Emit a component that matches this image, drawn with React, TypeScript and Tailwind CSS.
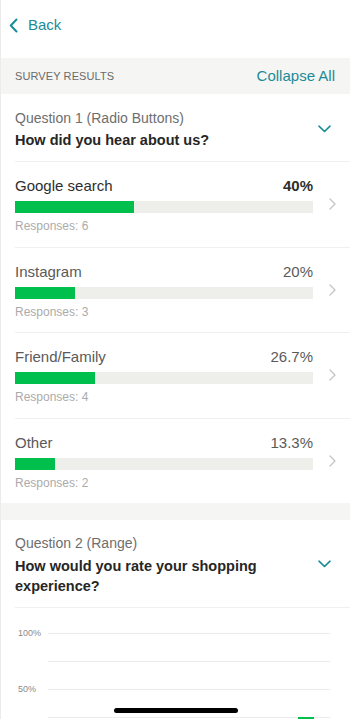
import React from "react";

const TEAL = "text-[#1b8b98]";

type Option = { label: string; pct: string; width: number; responses: number; top?: boolean };

const options: Option[] = [
  { label: "Google search", pct: "40%", width: 40, responses: 6, top: true },
  { label: "Instagram", pct: "20%", width: 20, responses: 3 },
  { label: "Friend/Family", pct: "26.7%", width: 26.7, responses: 4 },
  { label: "Other", pct: "13.3%", width: 13.3, responses: 2 },
];

function ChevronDown() {
  return (
    <svg width="13" height="8" viewBox="0 0 13 8" fill="none">
      <path d="M1 1.2l5.5 5.3L12 1.2" stroke="#1b8b98" strokeWidth="1.6" strokeLinecap="round" strokeLinejoin="round" />
    </svg>
  );
}

function ChevronRight() {
  return (
    <svg width="7" height="12" viewBox="0 0 7 12" fill="none">
      <path d="M1 1l5 5-5 5" stroke="#c4c4c8" strokeWidth="1.3" strokeLinecap="round" strokeLinejoin="round" />
    </svg>
  );
}

function OptionRow({ opt, last }: { opt: Option; last?: boolean }) {
  return (
    <div className={`ml-[14px] flex items-center ${last ? "" : "border-b border-[#f0f0ee]"}`}>
      <div className={`w-[298px] pt-[14px] ${last ? "pb-[12px]" : "pb-[12.5px]"}`}>
        <div className="flex h-5 items-center justify-between text-[15px] leading-5">
          <span className={opt.top ? "text-[#2e2e2e]" : "text-[#5a5a5a]"}>{opt.label}</span>
          <span className={opt.top ? "font-bold text-[#2e2e2e]" : "text-[#5a5a5a]"}>{opt.pct}</span>
        </div>
        <div className="mt-[5px] h-3 w-full bg-[#eeeeeb]">
          <div className="h-full bg-[#00bf4c]" style={{ width: `${opt.width}%` }} />
        </div>
        <div className="mt-[6px] text-[12px] leading-[15px] text-[#ababab]">Responses: {opt.responses}</div>
      </div>
      <div className="flex flex-1 justify-center pl-[2px]">
        <ChevronRight />
      </div>
    </div>
  );
}

export default function App() {
  return (
    <div
      className="relative h-[719px] w-[350px] overflow-hidden border-l border-[#ebebeb] bg-white"
      style={{ fontFamily: '"Liberation Sans", Arial, sans-serif' }}
    >
      {/* nav */}
      <div className="flex h-[58px] items-start pl-[8px] pt-[15px]">
        <div className={`flex items-center gap-[10px] text-[15px] leading-5 ${TEAL}`}>
          <svg width="9" height="15" viewBox="0 0 9 15" fill="none">
            <path d="M7.5 1.5L1.8 7.5l5.7 6" stroke="#1b8b98" strokeWidth="2" strokeLinecap="round" strokeLinejoin="round" />
          </svg>
          <span>Back</span>
        </div>
      </div>

      {/* section header */}
      <div className="flex h-9 items-center justify-between bg-[#f5f5f3] pl-[14px] pr-[15px]">
        <span className="text-[11px] tracking-[0.1px] text-[#6a6a6a]">SURVEY RESULTS</span>
        <span className={`text-[15px] ${TEAL}`}>Collapse All</span>
      </div>

      {/* question 1 */}
      <div className="ml-[14px] flex items-center border-b border-[#f0f0ee] pb-[10px] pt-[13px] pr-[19px]">
        <div className="flex-1 leading-[22px]">
          <div className="text-[14px] text-[#6e6e6e]">Question 1 (Radio Buttons)</div>
          <div className="text-[14.5px] font-bold text-[#262626]">How did you hear about us?</div>
        </div>
        <ChevronDown />
      </div>

      {options.map((o, i) => (
        <OptionRow key={o.label} opt={o} last={i === options.length - 1} />
      ))}

      <div className="h-[17px] bg-[#f5f5f3]" />

      {/* question 2 */}
      <div className="ml-[14px] flex items-center border-b border-[#f0f0ee] pb-[11px] pt-[12px] pr-[19px]">
        <div className="flex-1">
          <div className="text-[14px] leading-[22px] text-[#6e6e6e]">Question 2 (Range)</div>
          <div className="mt-[2px] w-[260px] text-[14.5px] font-bold leading-[20px] text-[#262626]">
            How would you rate your shopping experience?
          </div>
        </div>
        <ChevronDown />
      </div>

      {/* chart */}
      <div className="pl-[17px] pr-[20px] pt-[12px]">
        {["100%", "", "50%", ""].map((lbl, i) => (
          <div key={i} className="relative flex h-[28px] items-center">
            <span className="w-[30px] text-[9px] text-[#8a8a8a]">{lbl}</span>
            <div className="h-px flex-1 bg-[#ececec]" />
            {i === 3 && <div className="absolute left-[280px] top-[13px] h-4 w-[16px] bg-[#00bf4c]" />}
          </div>
        ))}
      </div>

      {/* home indicator */}
      <div className="absolute bottom-[6px] left-[113px] h-[5px] w-[124px] rounded-full bg-black" />
    </div>
  );
}
